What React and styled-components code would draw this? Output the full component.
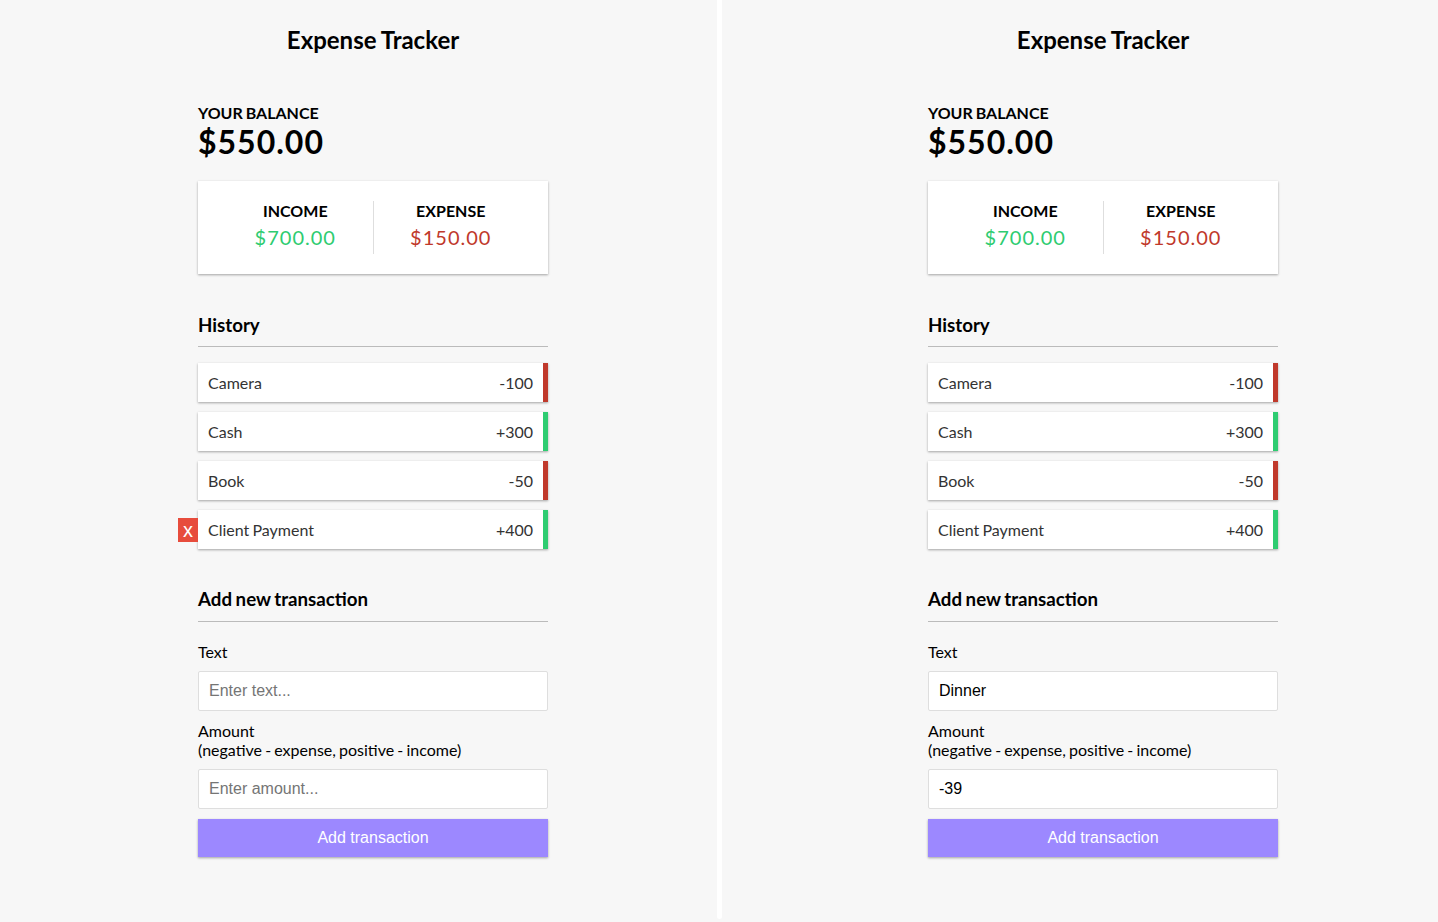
import React from "react";
import styled, { createGlobalStyle } from "styled-components";

const GlobalStyle = createGlobalStyle`
  * { box-sizing: border-box; }
  html, body { margin: 0; padding: 0; }
  body {
    background-color: #f7f7f7;
    font-family: Lato, "Noto Sans", sans-serif;
    word-spacing: -0.06em;
    color: #000;
  }
`;

const shadow = "0 1px 3px rgba(0,0,0,0.12), 0 1px 2px rgba(0,0,0,0.24)";

const Page = styled.div`
  display: grid;
  grid-template-columns: 717px 5px 716px;
  height: 922px;
  overflow: hidden;
`;

const Divider = styled.div`
  background: #ffffff;
  height: 919px;
  border-radius: 0 0 3px 3px;
`;

const Panel = styled.div`
  padding-top: 25px;
  padding-left: ${(p) => p.$offset}px;
`;

const Container = styled.div`
  width: 350px;
`;

const Title = styled.h2`
  margin: 0;
  font-size: 24px;
  font-weight: 700;
  line-height: 29px;
  text-align: center;
`;

const BalanceLabel = styled.h4`
  margin: 49px 0 0;
  font-size: 16px;
  font-weight: 700;
  line-height: 19px;
  text-transform: uppercase;
`;

const Balance = styled.h1`
  margin: 1px 0 0;
  font-size: 32px;
  font-weight: 700;
  line-height: 38px;
  letter-spacing: 1px;
`;

const IncExp = styled.div`
  background-color: #fff;
  box-shadow: ${shadow};
  padding: 20px;
  display: flex;
  justify-content: space-between;
  margin: 20px 0;
`;

const IncExpCol = styled.div`
  flex: 1;
  text-align: center;
  border-right: ${(p) => (p.$first ? "1px solid #dedede" : "none")};
`;

const ColLabel = styled.h4`
  margin: 0;
  font-size: 16px;
  font-weight: 700;
  line-height: 19px;
  text-transform: uppercase;
`;

const Money = styled.p`
  font-size: 20px;
  line-height: 24px;
  letter-spacing: 1px;
  margin: 5px 0;
  color: ${(p) => (p.$plus ? "#2ecc71" : "#c0392b")};
`;

const SectionTitle = styled.h3`
  font-size: 18.72px;
  font-weight: 700;
  line-height: 1.2;
  border-bottom: 1px solid #bbb;
  padding-bottom: 10px;
  margin: ${(p) => p.$top}px 0 10px;
`;

const List = styled.ul`
  list-style-type: none;
  padding: 0;
  margin: 16px 0 0;
`;

const Item = styled.li`
  background-color: #fff;
  box-shadow: ${shadow};
  color: #333;
  display: flex;
  justify-content: space-between;
  position: relative;
  padding: 10px;
  margin: 10px 0;
  font-size: 16px;
  line-height: 19px;
  border-right: 5px solid ${(p) => (p.$plus ? "#2ecc71" : "#c0392b")};
`;

const DeleteBtn = styled.button`
  background-color: #e74c3c;
  border: 0;
  color: #fff;
  font-family: "Liberation Sans", Arial, sans-serif;
  font-size: 20px;
  line-height: 20px;
  padding: 2px 5px;
  position: absolute;
  top: 50%;
  left: 0;
  transform: translate(-100%, -50%);
  opacity: ${(p) => (p.$visible ? 1 : 0)};
  cursor: pointer;
`;

const FormControl = styled.div``;

const Label = styled.label`
  display: inline-block;
  margin: 10px 0;
  font-size: 16px;
  line-height: 19px;
`;

const Input = styled.input`
  border: 1px solid #dedede;
  border-radius: 2px;
  display: block;
  font-family: "Liberation Sans", Arial, sans-serif;
  word-spacing: 0;
  font-size: 16px;
  line-height: 18px;
  padding: 10px;
  width: 100%;
  color: #000;
  background: #fff;
  margin: 0;
  &::placeholder { color: #757575; }
`;

const Button = styled.button`
  cursor: pointer;
  background-color: #9c88ff;
  box-shadow: ${shadow};
  color: #fff;
  border: 0;
  display: block;
  font-family: "Liberation Sans", Arial, sans-serif;
  word-spacing: 0;
  font-size: 16px;
  line-height: 18px;
  margin: 10px 0 30px;
  padding: 10px;
  width: 100%;
`;

const transactions = [
  { text: "Camera", amount: -100 },
  { text: "Cash", amount: 300 },
  { text: "Book", amount: -50 },
  { text: "Client Payment", amount: 400 },
];

function Tracker({ offset, hoverIndex, textValue, amountValue }) {
  return (
    <Panel $offset={offset}>
      <Container>
        <Title>Expense Tracker</Title>
        <BalanceLabel>Your Balance</BalanceLabel>
        <Balance>$550.00</Balance>
        <IncExp>
          <IncExpCol $first>
            <ColLabel>Income</ColLabel>
            <Money $plus>$700.00</Money>
          </IncExpCol>
          <IncExpCol>
            <ColLabel>Expense</ColLabel>
            <Money>$150.00</Money>
          </IncExpCol>
        </IncExp>
        <SectionTitle $top={40}>History</SectionTitle>
        <List>
          {transactions.map((t, i) => (
            <Item key={t.text} $plus={t.amount > 0}>
              {t.text}
              <span>
                {t.amount > 0 ? "+" : "-"}
                {Math.abs(t.amount)}
              </span>
              <DeleteBtn $visible={hoverIndex === i}>x</DeleteBtn>
            </Item>
          ))}
        </List>
        <SectionTitle $top={39}>Add new transaction</SectionTitle>
        <form onSubmit={(e) => e.preventDefault()}>
          <FormControl>
            <Label htmlFor={`text-${offset}`}>Text</Label>
            <Input
              type="text"
              id={`text-${offset}`}
              placeholder="Enter text..."
              defaultValue={textValue}
            />
          </FormControl>
          <FormControl>
            <Label htmlFor={`amount-${offset}`}>
              Amount <br />
              (negative - expense, positive - income)
            </Label>
            <Input
              type="text"
              id={`amount-${offset}`}
              placeholder="Enter amount..."
              defaultValue={amountValue}
            />
          </FormControl>
          <Button>Add transaction</Button>
        </form>
      </Container>
    </Panel>
  );
}

export default function App() {
  return (
    <>
      <GlobalStyle />
      <Page>
        <Tracker offset={198} hoverIndex={3} textValue="" amountValue="" />
        <Divider />
        <Tracker offset={206} hoverIndex={-1} textValue="Dinner" amountValue="-39" />
      </Page>
    </>
  );
}
